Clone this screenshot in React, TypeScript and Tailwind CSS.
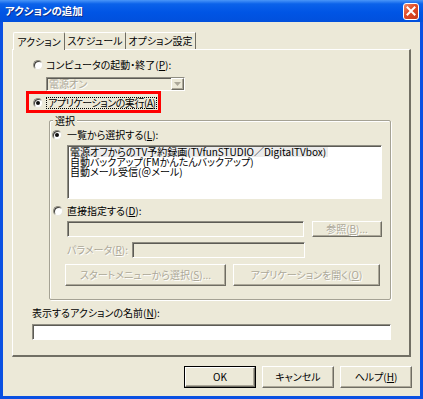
import React from "react";

const sunken =
  "border border-t-[#8f8d82] border-l-[#8f8d82] border-r-white border-b-white shadow-[inset_1px_1px_0_#5c5b55]";
const raised =
  "border border-t-white border-l-white border-r-[#6f6d63] border-b-[#6f6d63] shadow-[inset_-1px_-1px_0_#aca899] bg-[#ece9d8]";
const dim = "text-[#aca899] [text-shadow:1px_1px_0_#ffffff]";

function Radio({ checked }: { checked?: boolean }) {
  return (
    <span className="w-[10px] h-[10px] shrink-0 rounded-full border border-[#8e8c80] border-b-[#e8e6dc] border-r-[#e8e6dc] bg-white flex items-center justify-center shadow-[inset_1px_1px_0_#3f3e3a]">
      {checked && <span className="w-[4px] h-[4px] rounded-full bg-[#111]" />}
    </span>
  );
}

function Btn({
  children,
  w,
  disabled,
  isDefault,
}: {
  children: React.ReactNode;
  w: string;
  disabled?: boolean;
  isDefault?: boolean;
}) {
  const inner = (
    <div className={`${raised} ${w} h-full flex items-center justify-center ${disabled ? dim : "text-black"}`}>
      {children}
    </div>
  );
  if (isDefault) return <div className="h-full border border-black flex">{inner}</div>;
  return inner;
}

export default function App() {
  return (
    <div className="w-[423px] h-[399px] flex flex-col bg-[#0a50e2] font-['Noto_Sans_CJK_JP',sans-serif] text-[10px] leading-[10px] text-black [font-feature-settings:'palt'] select-none">
      {/* title bar */}
      <div className="h-[22px] shrink-0 flex items-center justify-between pl-[5px] pr-[4px] bg-[linear-gradient(to_bottom,#4a96f8_0%,#0b62ea_18%,#0055e5_55%,#0150dc_100%)]">
        <span className="text-white font-bold text-[10.5px] [text-shadow:1px_1px_0_#0a2e8c]">アクションの追加</span>
        <div className="w-[16px] h-[17px] rounded-[3px] border border-white bg-[linear-gradient(135deg,#f08b6a_0%,#e04a26_45%,#c5381a_100%)] flex items-center justify-center">
          <svg width="10" height="10" viewBox="0 0 10 10">
            <path d="M1.5 1.5 L8.5 8.5 M8.5 1.5 L1.5 8.5" stroke="#fff" strokeWidth="2" strokeLinecap="square" />
          </svg>
        </div>
      </div>

      {/* body */}
      <div className="flex-1 mx-[3px] mb-[3px] bg-[#ece9d8] flex flex-col pt-[10px] px-[9px]">
        {/* tabs */}
        <div className="flex h-[17px] items-end">
          <div className="relative z-10 h-[18px] -mb-px w-[52px] ml-px flex items-center justify-center bg-[#ece9d8] border-l border-t border-r border-l-white border-t-white border-r-[#6f6d63] rounded-t-[2px]">
            アクション
          </div>
          <div className="h-[17px] w-[61px] flex items-center justify-center border-t border-r border-t-white border-r-[#6f6d63]">
            スケジュール
          </div>
          <div className="h-[17px] w-[70px] flex items-center justify-center border-t border-r border-t-white border-r-[#6f6d63]">
            オプション設定
          </div>
        </div>

        {/* tab panel */}
        <div className="h-[308px] border-l border-t border-l-white border-t-white border-r-2 border-b-2 border-r-[#716f64] border-b-[#716f64] flex flex-col">
          {/* radio 1 */}
          <div className="mt-[9px] ml-[20px] h-[12px] flex items-center gap-[3px]">
            <Radio />
            <span>
              コンピュータの起動・終了(<u>P</u>):
            </span>
          </div>
          {/* dropdown */}
          <div className={`mt-[6px] ml-[33px] w-[139px] h-[14px] flex ${sunken} bg-[#ece9d8]`}>
            <span className={`flex-1 pl-[2px] flex items-center ${dim}`}>電源オン</span>
            <div className={`w-[13px] h-full ${raised} flex items-center justify-center`}>
              <svg width="7" height="4" viewBox="0 0 7 4">
                <path d="M0 0 H7 L3.5 4 Z" fill="#aca899" />
              </svg>
            </div>
          </div>
          {/* radio 2 with red highlight */}
          <div className="relative mt-[6px] ml-[20px] h-[12px] w-fit flex items-center gap-[3px]">
            <Radio checked />
            <span className="border border-dotted border-black px-px h-[12px] flex items-center tracking-[-0.45px]">
              アプリケーションの実行(<u>A</u>)
            </span>
            <div className="absolute left-[-7px] right-[-4px] top-[-6px] bottom-[-4px] border-[3px] border-[#ff0000]" />
          </div>

          {/* group box */}
          <div className="relative mt-[11px] ml-[36px] w-[342px] h-[180px] border border-[#a5a294] shadow-[inset_1px_1px_0_#fff,1px_1px_0_#fff] rounded-[2px] flex flex-col">
            <span className="absolute left-[3px] top-[-6px] px-[2px] bg-[#ece9d8] leading-[11px]">選択</span>
            <div className="mt-[8px] ml-[2px] h-[12px] flex items-center gap-[5px]">
              <Radio checked />
              <span>
                一覧から選択する(<u>L</u>):
              </span>
            </div>
            <div className={`mt-[4px] ml-[17px] w-[315px] h-[54px] bg-white ${sunken} pt-[1px] pl-[2px]`}>
              <div className="h-[10px] w-fit bg-[#ebebeb] pr-[2px]">電源オフからのTV予約録画(TVfunSTUDIO／DigitalTVbox)</div>
              <div className="h-[10px]">自動バックアップ(FMかんたんバックアップ)</div>
              <div className="h-[10px]">自動メール受信(＠メール)</div>
            </div>
            <div className="mt-[6px] ml-[3px] h-[12px] flex items-center gap-[4px]">
              <Radio />
              <span>
                直接指定する(<u>D</u>):
              </span>
            </div>
            <div className="mt-[4px] ml-[17px] h-[16px] flex gap-[8px]">
              <div className={`w-[237px] h-full ${sunken}`} />
              <Btn w="w-[70px]" disabled>
                参照(<u>B</u>)...
              </Btn>
            </div>
            <div className="mt-[5px] ml-[17px] h-[16px] flex items-center">
              <span className={`w-[65px] ${dim}`}>
                パラメータ(<u>R</u>):
              </span>
              <div className={`w-[173px] h-full ${sunken}`} />
            </div>
            <div className="mt-[6px] ml-[15px] h-[22px] flex gap-[7px]">
              <Btn w="w-[161px]" disabled>
                スタートメニューから選択(<u>S</u>)...
              </Btn>
              <Btn w="w-[147px]" disabled>
                アプリケーションを開く(<u>O</u>)
              </Btn>
            </div>
          </div>

          {/* name */}
          <div className="mt-[7px] ml-[19px] h-[12px] flex items-center">
            表示するアクションの名前(<u>N</u>):
          </div>
          <div className={`mt-[5px] ml-[19px] w-[359px] h-[16px] bg-white ${sunken}`} />
        </div>

        {/* dialog buttons */}
        <div className="mt-[9px] h-[22px] flex justify-end gap-[6px] -mr-[1px]">
          <Btn w="w-[70px]" isDefault>
            OK
          </Btn>
          <Btn w="w-[72px]">キャンセル</Btn>
          <Btn w="w-[72px]">
            ヘルプ(<u>H</u>)
          </Btn>
        </div>
      </div>
    </div>
  );
}
